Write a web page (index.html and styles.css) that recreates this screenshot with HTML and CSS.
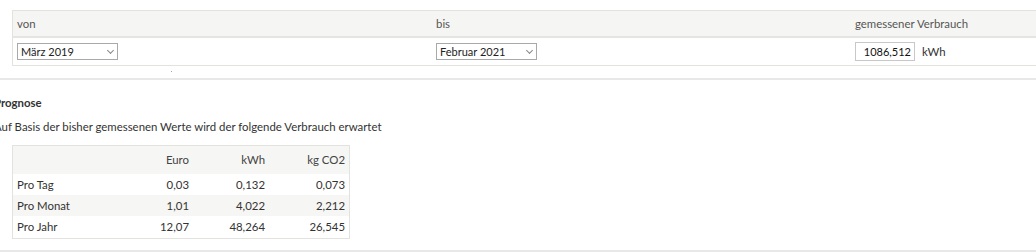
FILE: index.html
```html
<!DOCTYPE html>
<html lang="de">
<head>
<meta charset="utf-8">
<link rel="stylesheet" href="styles.css">
</head>
<body>
<div class="page">
  <table class="range">
    <thead>
      <tr><th class="c1">von</th><th class="c2">bis</th><th class="c3">gemessener Verbrauch</th></tr>
    </thead>
    <tbody>
      <tr>
        <td><span class="sel">März 2019<span class="chev"></span></span></td>
        <td><span class="sel">Februar 2021<span class="chev"></span></span></td>
        <td><span class="inp">1086,512</span><span class="unit">kWh</span></td>
      </tr>
    </tbody>
  </table>
  <div class="dot"></div>
  <hr class="rule">
  <h3 class="title">Prognose</h3>
  <p class="lead">Auf Basis der bisher gemessenen Werte wird der folgende Verbrauch erwartet</p>
  <table class="prog">
    <thead>
      <tr><th class="lbl"></th><th>Euro</th><th>kWh</th><th>kg CO2</th></tr>
    </thead>
    <tbody>
      <tr><td class="lbl">Pro Tag</td><td>0,03</td><td>0,132</td><td>0,073</td></tr>
      <tr class="alt"><td class="lbl">Pro Monat</td><td>1,01</td><td>4,022</td><td>2,212</td></tr>
      <tr><td class="lbl">Pro Jahr</td><td>12,07</td><td>48,264</td><td>26,545</td></tr>
    </tbody>
  </table>
  <hr class="rule bottom">
</div>
</body>
</html>
```
FILE: styles.css
```css
html, body { margin: 0; padding: 0; background: #fff; overflow: hidden; }
body { font-family: "Lato", "Open Sans", sans-serif; font-size: 11.4px; line-height: 16px; color: #333; }
.page { width: 1036px; padding-top: 10px; }

.range { margin-left: 12px; width: 1040px; border-collapse: collapse; border: 1px solid #e2e2de; table-layout: fixed; }
.range th { background: #f5f5f3; font-weight: normal; text-align: left; color: #555; height: 25px; padding: 0 4px; border-bottom: 2px solid #e4e4e0; }
.range th.c1 { width: 411px; }
.range th.c2 { width: 411px; }
.range td { height: 27px; padding: 0 4px; vertical-align: middle; }
.sel { display: inline-flex; align-items: center; justify-content: space-between; box-sizing: border-box; width: 101px; height: 17px; border: 1px solid #a9a9a9; padding: 0 4px 0 3px; font-size: 11px; color: #222; }
.chev { width: 4px; height: 4px; border-right: 1px solid #888; border-bottom: 1px solid #888; transform: rotate(45deg); margin-top: -3px; }
.inp { display: inline-block; box-sizing: border-box; width: 60px; height: 19px; line-height: 15px; border: 1px solid #c8c8c8; text-align: right; padding: 1px 3px 0 0; font-size: 11px; color: #111; vertical-align: middle; }
.unit { margin-left: 7px; vertical-align: middle; }

.dot { width: 1px; height: 1px; background: #a39cd6; margin: 5px 0 0 171px; }
.rule { border: 0; height: 2px; background: #e8e8e8; margin: 6px 0 0 0; }

.title { font-size: 11.4px; line-height: 16px; font-weight: bold; margin: 15px 0 0 -6px; color: #333; }
.lead { margin: 8px 0 0 -6px; }

.prog { margin: 10px 0 0 12px; width: 338px; border-collapse: collapse; border: 1px solid #e2e2de; }
.prog th { background: #f6f6f4; font-weight: normal; text-align: right; height: 28px; padding: 0 4px; color: #444; }
.prog td { text-align: right; height: 21px; padding: 0 4px; }
.prog tbody tr:last-child td { height: 22px; }
.prog .lbl { text-align: left; width: 100px; }
.prog tr.alt td { background: #f6f6f4; }
.prog th:nth-child(2), .prog td:nth-child(2) { width: 64px; }
.prog th:nth-child(3), .prog td:nth-child(3) { width: 68px; }
.rule.bottom { margin-top: 11px; }
```
